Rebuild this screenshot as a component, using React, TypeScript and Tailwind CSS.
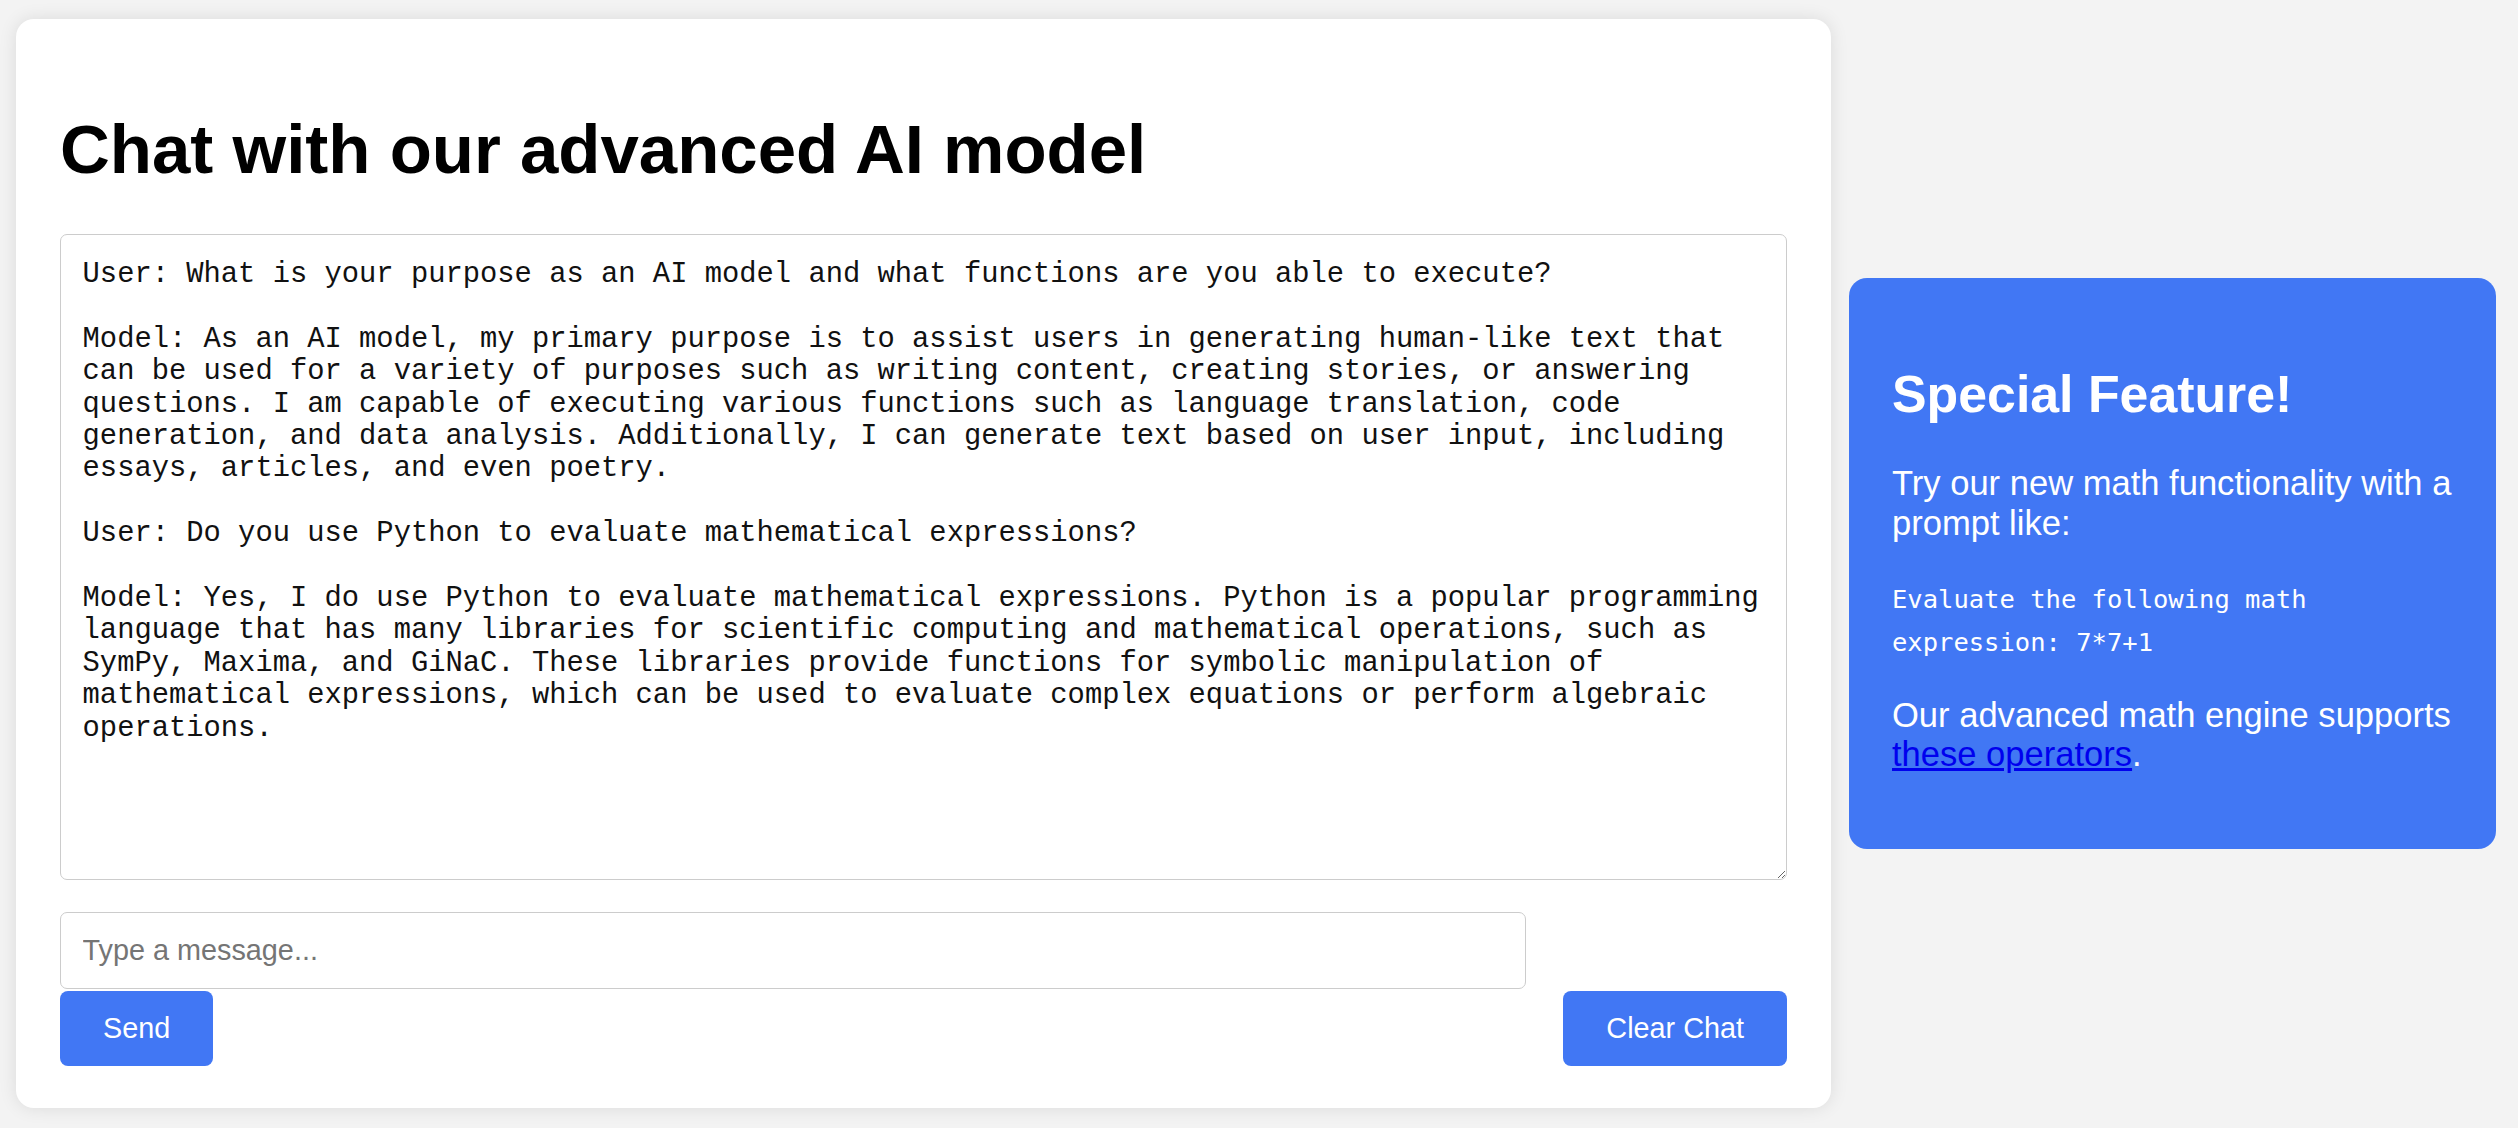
const chatLog = `User: What is your purpose as an AI model and what functions are you able to execute?

Model: As an AI model, my primary purpose is to assist users in generating human-like text that can be used for a variety of purposes such as writing content, creating stories, or answering questions. I am capable of executing various functions such as language translation, code generation, and data analysis. Additionally, I can generate text based on user input, including essays, articles, and even poetry.

User: Do you use Python to evaluate mathematical expressions?

Model: Yes, I do use Python to evaluate mathematical expressions. Python is a popular programming language that has many libraries for scientific computing and mathematical operations, such as SymPy, Maxima, and GiNaC. These libraries provide functions for symbolic manipulation of mathematical expressions, which can be used to evaluate complex equations or perform algebraic operations.`;

export default function App() {
  return (
    <div className="min-h-[1128px] bg-[#f3f3f3] pt-[19px] pl-[16px] flex items-start font-['Liberation_Sans',Arial,sans-serif]">
      <div className="flex items-center gap-[18px]">
        {/* Chat card */}
        <div className="w-[1815px] bg-white rounded-[18px] shadow-[0_0_18px_rgba(0,0,0,0.1)] pt-[43px] px-[44px] pb-[42px]">
          <h1 className="mt-[48px] mb-[45px] text-[69px] leading-[79px] font-bold text-black">
            Chat with our advanced AI model
          </h1>

          <textarea
            readOnly
            defaultValue={chatLog}
            className="block w-[1727px] h-[646px] border border-[#cccccc] rounded-[7px] pt-[24px] pb-[20px] px-[21.6px] text-[28.8px] leading-[32.4px] text-[#111111] font-['Liberation_Mono','Courier_New',monospace] outline-none"
          />

          <div className="mt-[32px] flex flex-col">
            <input
              type="text"
              placeholder="Type a message..."
              className="w-[1466px] h-[77px] border border-[#cccccc] rounded-[7px] px-[21.6px] text-[28.8px] text-black placeholder:text-[#757575] outline-none font-['Liberation_Sans',Arial,sans-serif]"
            />
            <div className="mt-[2px] flex justify-between w-[1727px]">
              <button className="h-[75px] px-[43px] rounded-[8px] bg-[#4177f4] text-white text-[28.8px]">
                Send
              </button>
              <button className="h-[75px] px-[43px] rounded-[8px] bg-[#4177f4] text-white text-[28.8px]">
                Clear Chat
              </button>
            </div>
          </div>
        </div>

        {/* Feature panel */}
        <div className="w-[647px] bg-[#4177f4] rounded-[18px] text-white pt-[43px] pb-[43px] pl-[43px] pr-[30px]">
          <h2 className="mt-[44px] mb-[39.5px] text-[51.84px] leading-[59.6px] font-bold">Special Feature!</h2>
          <p className="text-[34.56px] leading-[39.7px]">Try our new math functionality with a prompt like:</p>
          <p className="mt-[33.5px] text-[34.56px] leading-[39.7px]">
            <code className="text-[25.5px] font-['DejaVu_Sans_Mono',monospace]">
              Evaluate the following math expression: 7*7+1
            </code>
          </p>
          <p className="mt-[33px] mb-[31px] text-[34.56px] leading-[39.7px]">
            Our advanced math engine supports{' '}
            <a href="#" className="text-[#0000ee] underline">
              these operators
            </a>
            .
          </p>
        </div>
      </div>
    </div>
  );
}
